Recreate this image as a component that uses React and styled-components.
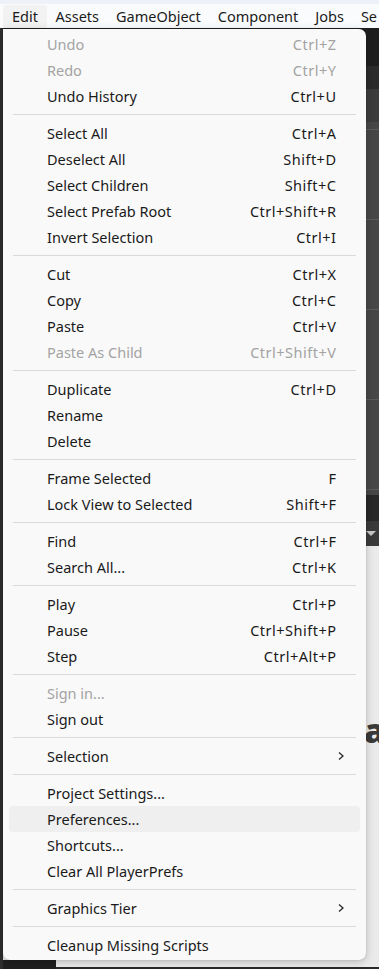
import React from "react";
import styled, { createGlobalStyle } from "styled-components";

const Global = createGlobalStyle`
  html, body { margin: 0; padding: 0; }
  body {
    width: 379px; height: 969px; overflow: hidden;
    font-family: "Noto Sans", "Open Sans", "Liberation Sans", sans-serif;
    background: #eceff4;
  }
`;

const Page = styled.div`
  position: relative;
  width: 379px;
  height: 969px;
  display: flex;
  flex-direction: column;
  overflow: hidden;
`;

const TopStrip = styled.div`
  height: 4px;
  background: #eef2f8;
`;

const MenuBar = styled.div`
  height: 24px;
  background: #fafbfc;
  display: flex;
  align-items: center;
  padding-left: 3px;
`;

const BarItem = styled.div`
  height: 23px;
  display: flex;
  align-items: center;
  padding: 0 ${(p) => (p.$active ? 9 : 8.5)}px;
  font-size: 14.5px;
  color: #1b1b1b;
  border-radius: 3px;
  background: ${(p) => (p.$active ? "#f2f2f2" : "transparent")};
  white-space: nowrap;
`;

const Workspace = styled.div`
  flex: 1;
  display: flex;
  background: #2a2a2a;
`;

const LeftStrip = styled.div`
  width: 3px;
  background: #2e2e2e;
`;

const Editor = styled.div`
  flex: 1;
  display: flex;
  flex-direction: column;
`;

const Band = styled.div`
  position: relative;
  height: ${(p) => p.$h}px;
  flex-shrink: 0;
  background-color: ${(p) => p.$bg};
  ${(p) => (p.$grow ? "flex: 1;" : "")}
  ${(p) =>
    p.$grid
      ? `background-image: linear-gradient(#5b5b5b 1px, transparent 1px), linear-gradient(90deg, #555555 1px, transparent 1px);
         background-size: 100% 90px, 100px 100%;
         background-position: 0 7px, 5px 0;`
      : ""}
`;

const Dropdown = styled.div`
  position: absolute;
  left: 363px;
  top: 10px;
  width: 0;
  height: 0;
  border-left: 5px solid transparent;
  border-right: 5px solid transparent;
  border-top: 5px solid #c8c8c8;
`;

const BottomBar = styled.div`
  height: 9px;
  flex-shrink: 0;
  display: flex;
  background: #ebebeb;
`;

const BottomDark = styled.div`
  width: 53px;
  background: #1f1f1f;
`;

const BottomLight = styled.div`
  flex: 1;
  border-bottom: 2px solid #2a2a2a;
`;

const Glyph = styled.div`
  position: absolute;
  left: 364px;
  top: 710px;
  font-family: "Noto Sans", sans-serif;
  font-weight: 900;
  font-size: 34px;
  line-height: 40px;
  color: #3a3a3a;
`;

const Menu = styled.div`
  position: absolute;
  top: 29px;
  left: 3px;
  width: 363px;
  box-sizing: border-box;
  padding: 2px 6px;
  background: #f9f9f9;
  border-radius: 0 7px 7px 7px;
  box-shadow: 0 2px 8px rgba(0, 0, 0, 0.22), 0 0 1px rgba(0, 0, 0, 0.3);
  display: flex;
  flex-direction: column;
`;

const Item = styled.div`
  height: 26px;
  display: flex;
  align-items: center;
  padding: 0 24px 0 38px;
  border-radius: 4px;
  font-size: 14.5px;
  color: ${(p) => (p.$disabled ? "#a3a3a3" : "#1a1a1a")};
  background: ${(p) => (p.$hover ? "#efefef" : "transparent")};
  white-space: nowrap;
`;

const Label = styled.span`
  flex: 1;
`;

const Shortcut = styled.span`
  text-align: right;
  letter-spacing: 0.5px;
  margin-right: -0.5px;
`;

const Arrow = styled.svg`
  width: 8px;
  height: 10px;
  margin-right: -9px;
`;

const Sep = styled.div`
  height: 11px;
  display: flex;
  align-items: center;
  padding: 0 4px;
  &::after {
    content: "";
    flex: 1;
    height: 1px;
    background: #dadada;
  }
`;

const groups = [
  [
    ["Undo", "Ctrl+Z", { disabled: true }],
    ["Redo", "Ctrl+Y", { disabled: true }],
    ["Undo History", "Ctrl+U"],
  ],
  [
    ["Select All", "Ctrl+A"],
    ["Deselect All", "Shift+D"],
    ["Select Children", "Shift+C"],
    ["Select Prefab Root", "Ctrl+Shift+R"],
    ["Invert Selection", "Ctrl+I"],
  ],
  [
    ["Cut", "Ctrl+X"],
    ["Copy", "Ctrl+C"],
    ["Paste", "Ctrl+V"],
    ["Paste As Child", "Ctrl+Shift+V", { disabled: true }],
  ],
  [
    ["Duplicate", "Ctrl+D"],
    ["Rename", ""],
    ["Delete", ""],
  ],
  [
    ["Frame Selected", "F"],
    ["Lock View to Selected", "Shift+F"],
  ],
  [
    ["Find", "Ctrl+F"],
    ["Search All...", "Ctrl+K"],
  ],
  [
    ["Play", "Ctrl+P"],
    ["Pause", "Ctrl+Shift+P"],
    ["Step", "Ctrl+Alt+P"],
  ],
  [
    ["Sign in...", "", { disabled: true }],
    ["Sign out", ""],
  ],
  [["Selection", "", { sub: true }]],
  [
    ["Project Settings...", ""],
    ["Preferences...", "", { hover: true }],
    ["Shortcuts...", ""],
    ["Clear All PlayerPrefs", ""],
  ],
  [["Graphics Tier", "", { sub: true }]],
  [["Cleanup Missing Scripts", ""]],
];

const Chevron = () => (
  <Arrow viewBox="0 0 8 10">
    <path d="M2 1.5 L6 5 L2 8.5" fill="none" stroke="#2a2a2a" strokeWidth="1.3" />
  </Arrow>
);

export default function App() {
  return (
    <>
      <Global />
      <Page>
        <TopStrip />
        <MenuBar>
          <BarItem $active>Edit</BarItem>
          <BarItem>Assets</BarItem>
          <BarItem>GameObject</BarItem>
          <BarItem>Component</BarItem>
          <BarItem>Jobs</BarItem>
          <BarItem>Se</BarItem>
        </MenuBar>
        <Workspace>
          <LeftStrip />
          <Editor>
            <Band $h={38} $bg="#1e1e1e" />
            <Band $h={23} $bg="#2b2b2b" />
            <Band $h={33} $bg="#3c3c3c" />
            <Band $h={373} $bg="#474747" $grid />
            <Band $h={26} $bg="#282828" />
            <Band $h={25} $bg="#3a3a3a">
              <Dropdown />
            </Band>
            <Band $grow $bg="#ebebeb" />
            <BottomBar>
              <BottomDark />
              <BottomLight />
            </BottomBar>
          </Editor>
        </Workspace>
        <Glyph>ac</Glyph>
        <Menu>
          {groups.map((g, gi) => (
            <React.Fragment key={gi}>
              {gi > 0 && <Sep />}
              {g.map(([label, sc, opt = {}]) => (
                <Item key={label} $disabled={opt.disabled} $hover={opt.hover}>
                  <Label>{label}</Label>
                  {sc && <Shortcut>{sc}</Shortcut>}
                  {opt.sub && <Chevron />}
                </Item>
              ))}
            </React.Fragment>
          ))}
        </Menu>
      </Page>
    </>
  );
}
